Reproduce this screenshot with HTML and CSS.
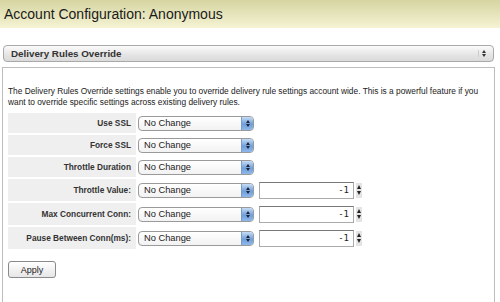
FILE: index.html
```html
<!doctype html>
<html>
<head>
  <meta charset="UTF-8">
  <title>Account Configuration</title>
  <link rel="stylesheet" href="styles.css">
</head>
<body>
  <div class="header">Account Configuration: Anonymous</div>

  <div class="panel-title">
    <span>Delivery Rules Override</span>
    <span class="arrows"><i class="up"></i><i class="down"></i></span>
  </div>

  <div class="content">
    <p class="desc">The Delivery Rules Override settings enable you to override delivery rule settings account wide. This is a powerful feature if you want to override specific settings across existing delivery rules.</p>

    <table class="rules">
      <tr>
        <th>Use SSL</th>
        <td><div class="select"><span>No Change</span><b class="step"><i class="up"></i><i class="down"></i></b></div></td>
        <td></td>
      </tr>
      <tr>
        <th>Force SSL</th>
        <td><div class="select"><span>No Change</span><b class="step"><i class="up"></i><i class="down"></i></b></div></td>
        <td></td>
      </tr>
      <tr>
        <th>Throttle Duration</th>
        <td><div class="select"><span>No Change</span><b class="step"><i class="up"></i><i class="down"></i></b></div></td>
        <td></td>
      </tr>
      <tr class="tall">
        <th>Throttle Value:</th>
        <td><div class="select"><span>No Change</span><b class="step"><i class="up"></i><i class="down"></i></b></div></td>
        <td><div class="num"><span class="box">-1</span><span class="spin"><i class="up"></i><i class="down"></i></span></div></td>
      </tr>
      <tr class="tall">
        <th>Max Concurrent Conn:</th>
        <td><div class="select"><span>No Change</span><b class="step"><i class="up"></i><i class="down"></i></b></div></td>
        <td><div class="num"><span class="box">-1</span><span class="spin"><i class="up"></i><i class="down"></i></span></div></td>
      </tr>
      <tr class="tall">
        <th>Pause Between Conn(ms):</th>
        <td><div class="select"><span>No Change</span><b class="step"><i class="up"></i><i class="down"></i></b></div></td>
        <td><div class="num"><span class="box">-1</span><span class="spin"><i class="up"></i><i class="down"></i></span></div></td>
      </tr>
    </table>

    <button class="apply">Apply</button>
  </div>
</body>
</html>
```

FILE: styles.css
```css
*{margin:0;
  padding:0;}
body{font-family:"Liberation Sans", Arial, sans-serif;
     color:#111;
     background:#fff;
     overflow:hidden;}
.header{height:28px;
        line-height:28px;
        padding-left:4px;
        font-size:14px;
        color:#1a1a1a;
        background:linear-gradient(#d6d5a2, #f5f3d3);}

.panel-title{height:15px;
             margin:17px 6px 0 3px;
             padding:0 4px 0 7px;
             border:1px solid #a9a9a9;
             border-radius:4px;
             background:linear-gradient(#fbfbfb, #e4e4e4 60%, #dadada);
             display:flex;
             align-items:center;
             justify-content:space-between;
             font-size:9.8px;
             font-weight:bold;
             color:#333;}
.panel-title .arrows{display:flex;
                     flex-direction:column;
                     gap:1px;
                     padding:0 3px;
                     border-left:1px solid #ccc;}

i.up,i.down{display:block;
            width:0;
            height:0;
            border-left:2px solid transparent;
            border-right:2px solid transparent;}
i.up{border-bottom:3px solid #333;}
i.down{border-top:3px solid #333;}

.content{margin:5px 5px 0 2px;
         height:216px;
         padding:18px 5px 0 5px;
         border:1px solid #bdbdbd;
         border-bottom:none;}
.desc{font-size:8.35px;
      line-height:11px;
      color:#222;}

.rules{border-collapse:separate;
       border-spacing:0 2px;
       margin-top:3px;}
.rules th{width:123px;
          height:20px;
          padding-right:5px;
          background:#efefef;
          text-align:right;
          font-size:8.3px;
          color:#333;
          white-space:nowrap;}
.rules .tall th{height:22px;}
.rules td{padding-left:2px;
          vertical-align:middle;}

.select{width:114px;
        height:13px;
        border:1px solid #9a9a9a;
        border-radius:4px;
        background:linear-gradient(#fff, #f2f2f2);
        display:flex;
        align-items:center;
        justify-content:space-between;
        font-size:9.3px;
        color:#222;
        overflow:hidden;}
.select span{padding-left:5px;}
.select .step{width:11px;
              height:13px;
              background:linear-gradient(#c6dcf5, #6e9fdc 55%, #8fb8ea);
              border-left:1px solid #7a9cc6;
              display:flex;
              flex-direction:column;
              align-items:center;
              justify-content:center;
              gap:1px;}
.select .step i.up{border-bottom-color:#223;}
.select .step i.down{border-top-color:#223;}

.num{display:flex;
     align-items:center;
     gap:2px;
     margin-left:3px;}
.num .box{width:89px;
          height:15px;
          line-height:15px;
          padding-right:4px;
          border:1px solid #aaa;
          border-top-color:#777;
          text-align:right;
          font-family:"DejaVu Sans Mono", monospace;
          font-size:9px;
          color:#222;}
.num .spin{width:6px;
           height:15px;
           background:#e4e4e4;
           display:flex;
           flex-direction:column;
           align-items:center;
           justify-content:center;
           gap:2px;}
.num .spin i.up{border-bottom:4px solid #222;}
.num .spin i.down{border-top:4px solid #222;}

.apply{margin-top:10px;
       width:48px;
       height:17px;
       border:1px solid #8a8a8a;
       border-radius:3px;
       background:linear-gradient(#fff, #e6e6e6);
       font-family:"Liberation Sans", Arial, sans-serif;
       font-size:9px;
       color:#222;}
```
